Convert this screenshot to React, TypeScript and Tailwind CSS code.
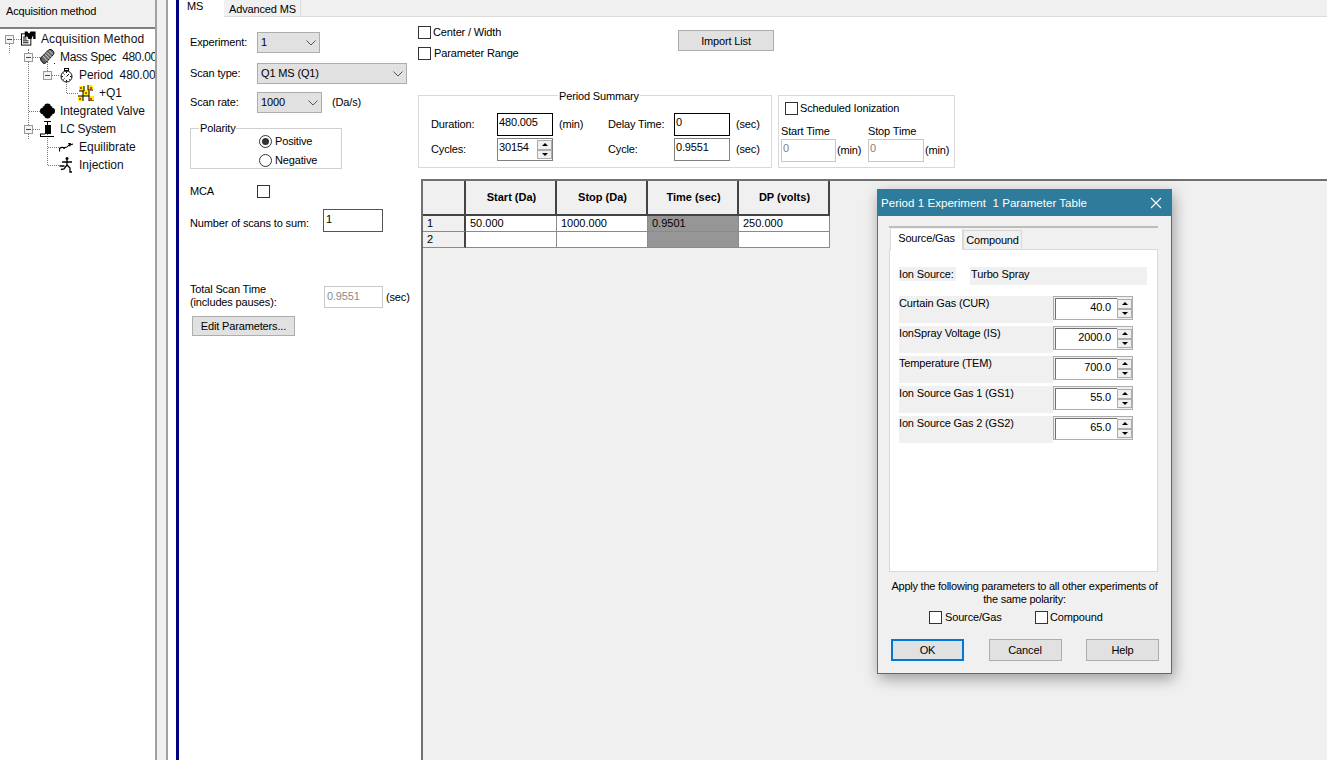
import type { ReactNode } from "react";

const FONT = "font-['Liberation_Sans',Arial,sans-serif]";

// ---- tree icons ----
function MethodIcon() {
  return (
    <svg width="16" height="16" viewBox="0 0 16 16">
      <rect x="0.500" y="2.500" width="10" height="12" fill="#fff" stroke="#000" strokeWidth="1" />
      <path d="M4 0h3l1.500 3L10 0h5.500v8h-2.500V4l-2 4H8L6 4v2H4z" fill="#000" />
      <path d="M2 6h3M2 8h4M2 10h6M2 12h6" stroke="#000" strokeWidth="1" />
    </svg>
  );
}
function MassSpecIcon() {
  return (
    <svg width="15" height="16" viewBox="0 0 15 16">
      <path d="M0.500 9 8.500 1c1.500-1 4-.5 5 1.500.5 1 .5 2 0 3L6 13.500c-1.500 1.500-3 1-3.500 0L1 11.500z" fill="#666" stroke="#000" strokeWidth="1" />
      <path d="M2.500 6.500l5 5.500M4.500 4.500l5 5.500M6.500 3l5 5M9 1.500l4 4" stroke="#d8d8d8" strokeWidth="1" />
      <rect x="14" y="14" width="1" height="1" fill="#00a" />
    </svg>
  );
}
function PeriodIcon() {
  return (
    <svg width="13" height="15" viewBox="0 0 13 15">
      <rect x="4.500" y="0.500" width="4" height="2" fill="#fff" stroke="#000" />
      <circle cx="6.500" cy="8.500" r="5.500" fill="#fff" stroke="#000" />
      <path d="M6.500 3.500v1.500M6.500 12v1.500M1.500 8.500H3M10 8.500h1.500M6.500 8.500 9 6M3.500 5.500l1 1M9 11l.7.7M3.500 11.500l1-1" stroke="#000" strokeWidth="1" />
    </svg>
  );
}
function ScanIcon() {
  return (
    <svg width="16" height="16" viewBox="0 0 16 16">
      <path d="M1 1h5v5H1zM10 0h5v5h-5zM5 5h6v6H5zM0 11h5v5H0zM11 11h5v5h-5z" fill="#ffee00" />
      <path d="M2 2h2v2H2zM12 2h2v2h-2zM7 7h2v2H7zM1 13h2v2H1zM12 13h2v2h-2z" fill="#e8401c" />
      <path d="M6 1v5H1M10 0v5h5M5 6v5h6V6M5 11v5M11 11v5h5M0 11h5" stroke="#000" strokeWidth="1" fill="none" />
    </svg>
  );
}
function ValveIcon() {
  return (
    <svg width="16" height="16" viewBox="0 0 16 16">
      <circle cx="8" cy="3.500" r="3.500" fill="#000" />
      <circle cx="8" cy="12.500" r="3.500" fill="#000" />
      <circle cx="3.500" cy="8" r="3.500" fill="#000" />
      <circle cx="12.500" cy="8" r="3.500" fill="#000" />
      <rect x="3" y="3" width="10" height="10" fill="#000" />
    </svg>
  );
}
function PumpIcon() {
  return (
    <svg width="15" height="16" viewBox="0 0 15 16">
      <path d="M4 0.500h7M7.500 0.500V4" stroke="#000" strokeWidth="1" fill="none" />
      <rect x="5" y="4" width="6" height="9" fill="#000" />
      <path d="M0 15.500h14M0.500 15.500V13M0 13h5" stroke="#000" strokeWidth="1" fill="none" />
    </svg>
  );
}
function EquilibrateIcon() {
  return (
    <svg width="15" height="10" viewBox="0 0 15 10">
      <path d="M0.500 9.500V6.500C2 5 3 5 4.500 5.500s3 .5 5-2l4.500-1.500" stroke="#000" strokeWidth="1.200" fill="none" />
      <path d="M9 1h3l-1 4z" fill="#000" />
      <circle cx="5" cy="6" r="1" fill="#000" />
    </svg>
  );
}
function InjectionIcon() {
  return (
    <svg width="15" height="16" viewBox="0 0 15 16">
      <circle cx="8" cy="1.500" r="1.500" fill="#000" />
      <path d="M8 3v5M3 5h10M8 8l-3 4-3 .5M8 8l3 3v4h2M0.500 9h5" stroke="#000" strokeWidth="1.300" fill="none" />
    </svg>
  );
}

// ---- win32 bits ----
function Expander() {
  return (
    <span className="relative block w-[9px] h-[9px] border border-[#9a9a9a] bg-[#f4f4f4]">
      <span className="absolute left-[1px] top-[3px] w-[5px] h-px bg-[#2b4a8a]" />
    </span>
  );
}

function TreeRow({
  indent,
  expander,
  icon,
  iconWidth,
  children,
}: {
  indent: number;
  expander?: boolean;
  icon: ReactNode;
  iconWidth: number;
  children: ReactNode;
}) {
  return (
    <div className="relative flex items-center h-[18px] whitespace-nowrap" style={{ paddingLeft: indent }}>
      <span className="relative w-[16px] flex items-center shrink-0">
        {expander && <Expander />}
        <span
          className="absolute top-1/2 border-t border-dotted border-[#777]"
          style={{ left: expander ? 9 : 5, width: expander ? 7 : 11 }}
        />
      </span>
      <span className="flex items-center justify-center shrink-0" style={{ width: iconWidth }}>
        {icon}
      </span>
      <span className="ml-[5px] text-[12px] tracking-normal text-[#10101a]">{children}</span>
    </div>
  );
}

function Check({ className = "" }: { className?: string }) {
  return <span className={`block w-[13px] h-[13px] border border-[#333] bg-white shrink-0 ${className}`} />;
}

function Chevron() {
  return (
    <svg width="10" height="6" viewBox="0 0 10 6" className="shrink-0">
      <path d="M0.500 0.500 5 5 9.500 0.500" stroke="#555" strokeWidth="1" fill="none" />
    </svg>
  );
}

function Select({ value, width }: { value: string; width: number }) {
  return (
    <div
      className="flex items-center justify-between h-[21px] pl-[3px] pr-[3px] bg-[#e1e1e1] border border-[#adadad]"
      style={{ width }}
    >
      <span>{value}</span>
      <Chevron />
    </div>
  );
}

function Spinner({ small }: { small?: boolean }) {
  const h = small ? "h-[10px]" : "h-[11px]";
  return (
    <div className="flex flex-col justify-between w-[15px] h-full py-px shrink-0">
      <span className={`flex items-center justify-center ${h} bg-[#f0f0f0] border border-[#adadad]`}>
        <span className="w-0 h-0 border-x-[3px] border-x-transparent border-b-[3px] border-b-black" />
      </span>
      <span className={`flex items-center justify-center ${h} bg-[#f0f0f0] border border-[#adadad]`}>
        <span className="w-0 h-0 border-x-[3px] border-x-transparent border-t-[3px] border-t-black" />
      </span>
    </div>
  );
}

function Button({ label, focused, className = "" }: { label: string; focused?: boolean; className?: string }) {
  return (
    <div
      className={`flex items-center justify-center bg-[#e1e1e1] ${
        focused ? "border-2 border-[#0078d7]" : "border border-[#adadad]"
      } ${className}`}
    >
      {label}
    </div>
  );
}

function Input({ value, className = "" }: { value: string; className?: string }) {
  return <div className={`px-[1px] leading-[16px] bg-white ${className}`}>{value}</div>;
}

// ---- dialog ----
const SOURCE_ROWS = [
  { label: "Curtain Gas (CUR)", value: "40.0" },
  { label: "IonSpray Voltage (IS)", value: "2000.0" },
  { label: "Temperature (TEM)", value: "700.0" },
  { label: "Ion Source Gas 1 (GS1)", value: "55.0" },
  { label: "Ion Source Gas 2 (GS2)", value: "65.0" },
];

function ParameterDialog() {
  return (
    <div className="absolute left-[877px] top-[189px] w-[295px] h-[485px] flex flex-col bg-[#f0f0f0] border border-[#2e7b9b] shadow-[2px_5px_14px_rgba(0,0,0,0.35)] text-black">
      <div className="flex items-center justify-between h-[26px] pl-[3px] pr-[9px] bg-[#2e7b9b] text-white text-[11.600px] tracking-normal shrink-0">
        <span className="whitespace-pre">Period 1 Experiment  1 Parameter Table</span>
        <svg width="12" height="12" viewBox="0 0 12 12">
          <path d="M1 1l10 10M11 1 1 11" stroke="#fff" strokeWidth="1.100" />
        </svg>
      </div>
      <div className="ml-[11px] mr-[13px] mt-[10px] h-[346px] flex flex-col border-t-2 border-[#bdbdbd]">
        <div className="flex items-end h-[21px] pl-px shrink-0">
          <div className="relative z-10 flex items-center justify-center w-[73px] h-[21px] pb-[2px] -mb-px bg-white border-x border-[#d9d9d9]">
            Source/Gas
          </div>
          <div className="flex items-center justify-center w-[59px] h-[19px] bg-[#f0f0f0] border border-b-0 border-[#d9d9d9]">
            Compound
          </div>
        </div>
        <div className="flex-1 bg-white border border-[#d9d9d9] px-[9px] pt-[17px]">
          <div className="flex items-start h-[18px] whitespace-nowrap">
            <span className="w-[57px] h-[14px] leading-[14px] bg-[#f0f0f0]">Ion Source:</span>
            <span className="ml-[14px] w-[177px] h-[18px] pl-[1px] leading-[14px] bg-[#f0f0f0]">Turbo Spray</span>
          </div>
          <div className="mt-[11px] flex flex-col gap-[3px]">
            {SOURCE_ROWS.map((r) => (
              <div key={r.label} className="flex items-start h-[27px]">
                <span className="w-[154px] h-full leading-[14px] bg-[#f0f0f0] whitespace-nowrap">{r.label}</span>
                <div className="flex w-[80px] h-[24px] border border-[#adadad] bg-[#f0f0f0] pl-px pt-px">
                  <span className="flex-1 flex items-center justify-end pr-[6px] pb-[3px] bg-white border-l border-t border-[#707070]">
                    {r.value}
                  </span>
                  <Spinner />
                </div>
              </div>
            ))}
          </div>
        </div>
      </div>
      <p className="mt-[8px] text-center leading-[13px] tracking-[-0.24px] whitespace-nowrap">
        Apply the following parameters to all other experiments of
        <br />
        the same polarity:
      </p>
      <div className="mt-[3px] flex items-center h-[16px] pl-[51px]">
        <Check />
        <span className="ml-[3px] w-[90px]">Source/Gas</span>
        <Check />
        <span className="ml-[2px]">Compound</span>
      </div>
      <div className="mt-[14px] flex justify-between pl-[13px] pr-[12px]">
        <Button label="OK" focused className="w-[73px] h-[22px]" />
        <Button label="Cancel" className="w-[73px] h-[22px]" />
        <Button label="Help" className="w-[73px] h-[22px]" />
      </div>
    </div>
  );
}

// ---- grid ----
const COLUMNS = ["Start (Da)", "Stop (Da)", "Time (sec)", "DP (volts)"];
const ROWS = [
  ["1", "50.000", "1000.000", "0.9501", "250.000"],
  ["2", "", "", "", ""],
];

function ScanGrid() {
  return (
    <div className="flex flex-col w-fit text-[11px] tracking-normal">
      <div className="flex h-[35px]">
        {["", ...COLUMNS].map((c, i) => (
          <div
            key={c}
            className={`flex items-center justify-center pl-[2px] pb-[1px] font-bold bg-[#f0f0f0] border-r-2 border-b-2 border-[#444] ${
              i === 0 ? "w-[43px]" : "w-[91px]"
            }`}
          >
            {c}
          </div>
        ))}
      </div>
      {ROWS.map((row) => (
        <div key={row[0]} className="flex h-[16px]">
          {row.map((v, i) => (
            <div
              key={i}
              className={`flex items-center pl-[4px] border-b border-[#8a8a8a] ${
                i === 0
                  ? "w-[43px] bg-[#f0f0f0] border-r-2 border-r-[#444]"
                  : i === 3
                    ? "w-[91px] bg-[#969696] border-r border-r-[#8a8a8a]"
                    : "w-[91px] bg-white border-r border-r-[#8a8a8a]"
              }`}
            >
              {v}
            </div>
          ))}
        </div>
      ))}
    </div>
  );
}

export default function App() {
  return (
    <div className={`relative flex w-full h-screen overflow-hidden bg-white text-[11px] tracking-[-0.15px] text-black ${FONT}`}>
      {/* Method tree */}
      <aside className="w-[155px] shrink-0 flex flex-col overflow-hidden">
        <div className="h-[29px] shrink-0 pl-[6px] pt-[3px] bg-[#f0f0f0] border-b-2 border-[#808080]">Acquisition method</div>
        <div className="relative pt-[1px]">
          <span className="absolute left-[9px] top-[14px] h-[10px] border-l border-dotted border-[#777]" />
          <span className="absolute left-[28px] top-[20px] h-[90px] border-l border-dotted border-[#777]" />
          <span className="absolute left-[47px] top-[32px] h-[10px] border-l border-dotted border-[#777]" />
          <span className="absolute left-[66px] top-[50px] h-[14px] border-l border-dotted border-[#777]" />
          <span className="absolute left-[47px] top-[104px] h-[32px] border-l border-dotted border-[#777]" />
          <TreeRow indent={5} expander icon={<MethodIcon />} iconWidth={15}>
            <span className="tracking-[0.1px]">Acquisition Method</span>
          </TreeRow>
          <TreeRow indent={24} expander icon={<MassSpecIcon />} iconWidth={15}>
            <span className="whitespace-pre tracking-[-0.35px]">Mass Spec  480.005</span>
          </TreeRow>
          <TreeRow indent={43} expander icon={<PeriodIcon />} iconWidth={15}>
            <span className="whitespace-pre tracking-[-0.1px]">Period  480.005</span>
          </TreeRow>
          <TreeRow indent={62} icon={<ScanIcon />} iconWidth={16}>+Q1</TreeRow>
          <TreeRow indent={24} icon={<ValveIcon />} iconWidth={15}>
            <span className="tracking-[-0.1px]">Integrated Valve</span>
          </TreeRow>
          <TreeRow indent={24} expander icon={<PumpIcon />} iconWidth={15}>
            <span className="tracking-[-0.35px]">LC System</span>
          </TreeRow>
          <TreeRow indent={43} icon={<EquilibrateIcon />} iconWidth={15}>Equilibrate</TreeRow>
          <TreeRow indent={43} icon={<InjectionIcon />} iconWidth={15}>Injection</TreeRow>
        </div>
      </aside>

      {/* Splitter */}
      <div className="w-[13px] shrink-0 bg-[#f0f0f0] border-l-2 border-r-2 border-[#a0a0a0]" />
      <div className="w-[8px] shrink-0 bg-white" />
      <div className="w-[3px] shrink-0 bg-[#000080]" />

      {/* Method editor */}
      <main className="flex-1 min-w-0 flex flex-col">
        <div className="flex h-[17px] shrink-0 bg-[#f0f0f0] border-b border-[#dcdcdc] whitespace-nowrap">
          <div className="w-[45px] h-[17px] pl-[8px] leading-[12px] bg-white">MS</div>
          <div className="w-[77px] pl-[5px] pt-[1px] border-r border-[#dcdcdc]">Advanced MS</div>
        </div>

        <div className="flex-1 min-h-0 flex">
          {/* Left form */}
          <div className="w-[239px] shrink-0 pl-[11px] whitespace-nowrap">
            <div className="flex items-center mt-[15px]">
              <span className="w-[67px]">Experiment:</span>
              <Select value="1" width={63} />
            </div>
            <div className="flex items-center mt-[10px]">
              <span className="w-[67px]">Scan type:</span>
              <Select value="Q1 MS (Q1)" width={150} />
            </div>
            <div className="flex items-center mt-[8px]">
              <span className="w-[67px]">Scan rate:</span>
              <Select value="1000" width={65} />
              <span className="ml-[10px]">(Da/s)</span>
            </div>
            <fieldset className="mt-[8px] w-[152px] h-[48px] border border-[#d0d0d0] pl-[68px] m-0">
              <legend className="-ml-[60px] px-[1px] leading-[14px]">Polarity</legend>
              <div className="flex items-center gap-[3px] h-[19px] -mt-[3px]">
                <span className="flex items-center justify-center w-[13px] h-[13px] rounded-full border border-[#333]">
                  <span className="w-[7px] h-[7px] rounded-full bg-[#333]" />
                </span>
                Positive
              </div>
              <div className="flex items-center gap-[3px] h-[19px]">
                <span className="w-[13px] h-[13px] rounded-full border border-[#333]" />
                Negative
              </div>
            </fieldset>
            <div className="flex items-center mt-[15px] h-[14px]">
              <span className="w-[67px]">MCA</span>
              <Check />
            </div>
            <div className="flex items-center mt-[11px]">
              <span className="w-[133px] pt-[6px]">Number of scans to sum:</span>
              <Input value="1" className="w-[60px] h-[23px] pl-[2px] pt-[1px] border border-[#555]" />
            </div>
            <div className="flex items-center mt-[53px]">
              <span className="w-[134px] -mt-[2px] leading-[13px]">
                Total Scan Time
                <br />
                (includes pauses):
              </span>
              <Input value="0.9551" className="w-[59px] h-[22px] pl-[2px] pt-[1px] border border-[#c8c8c8] text-[#8a8a8a]" />
              <span className="ml-[3px]">(sec)</span>
            </div>
            <Button label="Edit Parameters..." className="ml-[2px] mt-[7px] w-[103px] h-[20px]" />
          </div>

          {/* Right side */}
          <div className="flex-1 min-w-0 flex flex-col">
            <div className="h-[162px] shrink-0 whitespace-nowrap">
              <div className="flex">
                <div className="w-[260px] shrink-0 pt-[8px]">
                  <div className="flex items-center h-[14px] gap-[2px]">
                    <Check />
                    Center / Width
                  </div>
                  <div className="flex items-center h-[14px] mt-[7px] gap-[3px]">
                    <Check />
                    Parameter Range
                  </div>
                </div>
                <Button label="Import List" className="mt-[13px] w-[96px] h-[21px] pt-[1px]" />
              </div>
              <div className="flex mt-[35px] gap-[6px]">
                <fieldset className="relative w-[354px] h-[73px] border border-[#d9d9d9] m-0 shrink-0">
                  <span className="absolute left-[139px] -top-[7px] px-[1px] bg-white leading-[14px]">Period Summary</span>
                  <div className="flex items-center mt-[17px] h-[23px]">
                    <span className="ml-[12px] w-[66px]">Duration:</span>
                    <Input value="480.005" className="w-[56px] h-[23px] border border-black" />
                    <span className="ml-[6px] w-[49px]">(min)</span>
                    <span className="w-[66px]">Delay Time:</span>
                    <Input value="0" className="w-[56px] h-[23px] border border-black" />
                    <span className="ml-[6px]">(sec)</span>
                  </div>
                  <div className="flex items-center mt-[2px] h-[23px]">
                    <span className="ml-[12px] w-[66px]">Cycles:</span>
                    <div className="flex w-[56px] h-[23px] border border-[#808080]">
                      <span className="flex-1 px-[1px] leading-[16px]">30154</span>
                      <Spinner small />
                    </div>
                    <span className="ml-[6px] w-[49px]" />
                    <span className="w-[66px]">Cycle:</span>
                    <Input value="0.9551" className="w-[56px] h-[23px] border border-[#808080]" />
                    <span className="ml-[6px]">(sec)</span>
                  </div>
                </fieldset>
                <div className="w-[177px] h-[73px] border border-[#d9d9d9] pl-[2px] shrink-0">
                  <div className="flex items-center h-[13px] mt-[6px] ml-[4px] gap-[2px]">
                    <Check />
                    Scheduled Ionization
                  </div>
                  <div className="flex mt-[9px] h-[15px] leading-[15px]">
                    <span className="w-[87px]">Start Time</span>
                    <span>Stop Time</span>
                  </div>
                  <div className="flex items-center text-[#808080]">
                    <Input value="0" className="w-[55px] h-[23px] border border-[#c8c8c8]" />
                    <span className="ml-[1px] w-[31px] text-black">(min)</span>
                    <Input value="0" className="w-[56px] h-[23px] border border-[#c8c8c8]" />
                    <span className="ml-[1px] text-black">(min)</span>
                  </div>
                </div>
              </div>
            </div>
            <div className="flex-1 min-h-0 ml-[3px] bg-[#f0f0f0] border-t-2 border-l-2 border-[#707070]">
              <ScanGrid />
            </div>
          </div>
        </div>
      </main>

      <ParameterDialog />
    </div>
  );
}
